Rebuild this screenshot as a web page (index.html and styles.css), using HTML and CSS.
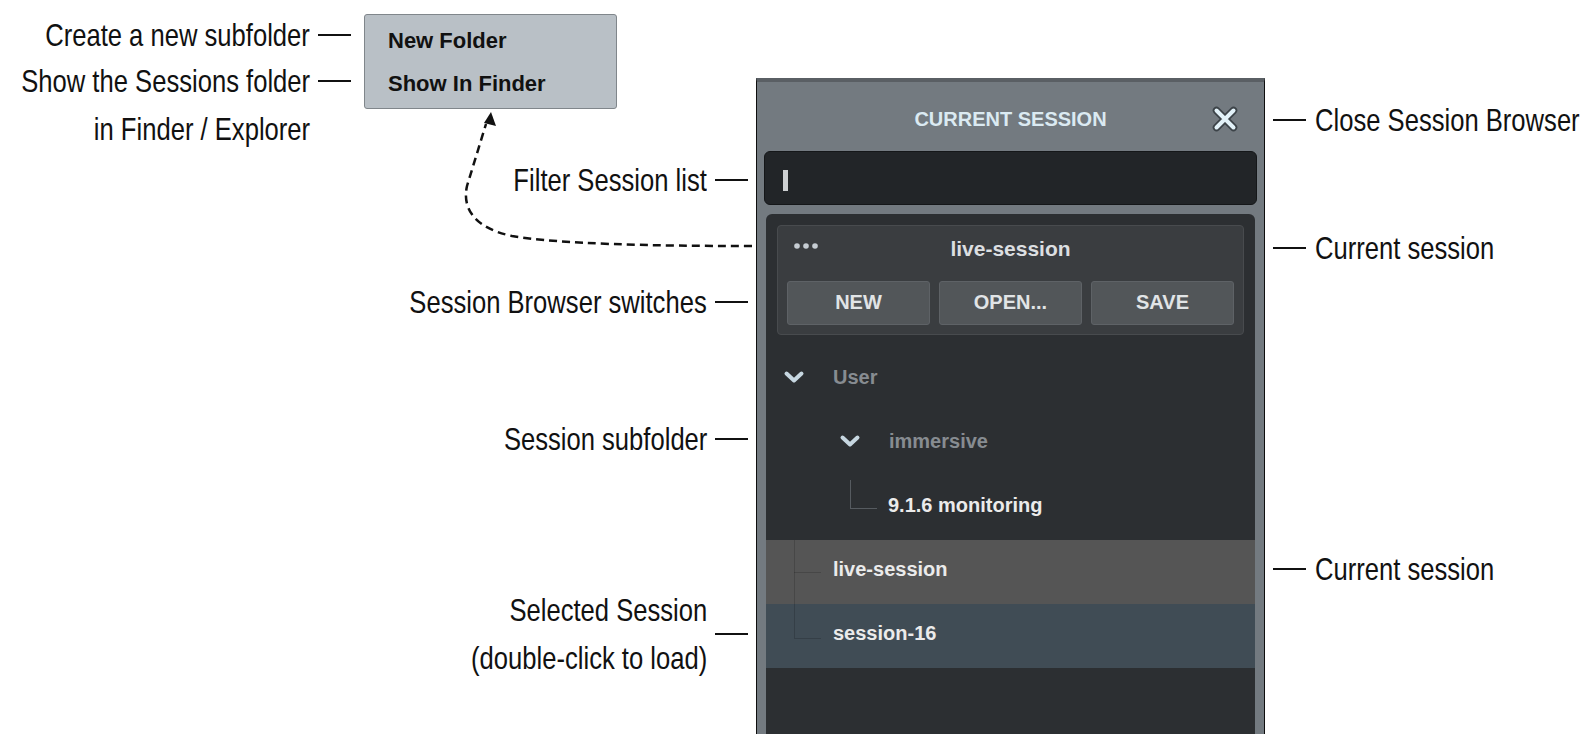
FILE: index.html
```html
<!DOCTYPE html>
<html lang="en">
  <head>
    <meta charset="UTF-8" />
    <meta name="viewport" content="width=device-width, initial-scale=1.0" />
    <title>Session Browser</title>
    <link rel="stylesheet" href="styles.css">
  </head>
  <body>
    <div class="page">
      <div class="left">
        <svg class="arrow" width="756" height="734" viewBox="0 0 756 734">
          <path d="M752 246 C650 246 560 244 512 236 C474 228 462 208 467 186 L486 124" fill="none" stroke="#111" stroke-width="2.5" stroke-dasharray="8 5" />
          <polygon points="491,112 496,126 484,123" fill="#111" />
        </svg>

        <div class="menu-group">
          <div class="menu-notes">
            <div class="note note-first"><span>Create a new subfolder</span><i class="dash"></i></div>
            <div class="note note-two"><span>Show the Sessions folder<br>in Finder / Explorer</span><i class="dash"></i></div>
          </div>
          <div class="menu">
            <div class="menu-item">New Folder</div>
            <div class="menu-item">Show In Finder</div>
          </div>
        </div>

        <div class="panel-notes">
          <div class="note note-filter"><span>Filter Session list</span><i class="dash"></i></div>
          <div class="note note-switches"><span>Session Browser switches</span><i class="dash"></i></div>
          <div class="note note-subfolder"><span>Session subfolder</span><i class="dash"></i></div>
          <div class="note note-selected"><span>Selected Session<br>(double-click to load)</span><i class="dash"></i></div>
        </div>
      </div>

      <div class="panel">
        <div class="panel-head">
          <span></span>
          <span class="panel-title">CURRENT SESSION</span>
          <svg class="close" width="28" height="28" viewBox="0 0 28 28">
            <path d="M5.5 5.5 L22.5 22.5 M22.5 5.5 L5.5 22.5" stroke="#3c4348" stroke-width="7.5" stroke-linecap="round" />
            <path d="M5.5 5.5 L22.5 22.5 M22.5 5.5 L5.5 22.5" stroke="#e2f1f8" stroke-width="4" stroke-linecap="round" />
          </svg>
        </div>

        <div class="search"><i class="cursor"></i></div>

        <div class="list">
          <div class="card">
            <div class="card-head">
              <svg class="dots" width="24" height="6" viewBox="0 0 24 6">
                <circle cx="3" cy="3" r="2.8" fill="#c6cdd3" />
                <circle cx="12" cy="3" r="2.8" fill="#c6cdd3" />
                <circle cx="21" cy="3" r="2.8" fill="#c6cdd3" />
              </svg>
              <span class="card-title">live-session</span>
              <span></span>
            </div>
            <div class="card-buttons">
              <button>NEW</button>
              <button>OPEN...</button>
              <button>SAVE</button>
            </div>
          </div>

          <div class="row folder level-0">
            <svg class="chevron" width="22" height="14" viewBox="0 0 22 14">
              <polyline points="3.5,3.5 11,10.5 18.5,3.5" fill="none" stroke="#c7d7e1" stroke-width="4" stroke-linecap="round" stroke-linejoin="round" />
            </svg>
            <span class="row-name">User</span>
          </div>
          <div class="row folder level-1">
            <svg class="chevron" width="22" height="14" viewBox="0 0 22 14">
              <polyline points="3.5,3.5 11,10.5 18.5,3.5" fill="none" stroke="#c7d7e1" stroke-width="4" stroke-linecap="round" stroke-linejoin="round" />
            </svg>
            <span class="row-name">immersive</span>
          </div>
          <div class="row session level-2">
            <span class="row-name">9.1.6 monitoring</span>
          </div>
          <div class="row session level-1s current">
            <span class="row-name">live-session</span>
          </div>
          <div class="row session level-1s selected last">
            <span class="row-name">session-16</span>
          </div>
        </div>
      </div>

      <div class="right">
        <div class="note note-close"><i class="dash"></i><span>Close Session Browser</span></div>
        <div class="note note-current"><i class="dash"></i><span>Current session</span></div>
        <div class="note note-current2"><i class="dash"></i><span>Current session</span></div>
      </div>
    </div>
  </body>
</html>
```

FILE: styles.css
```css
body {
  margin: 0;
  background: #fff;
  font-family: "Liberation Sans", Arial, sans-serif;
  overflow: hidden;
}
.page {
  display: flex;
  width: 1594px;
  height: 734px;
}

/* annotations */
.left {
  position: relative;
  width: 756px;
  flex-shrink: 0;
}
.arrow {
  position: absolute;
  top: 0;
  left: 0;
  pointer-events: none;
}
.note {
  display: flex;
  align-items: center;
  justify-content: flex-end;
  gap: 8px;
  font-family: "Liberation Sans", Arial, sans-serif;
  font-size: 32px;
  line-height: 46px;
  color: #111;
  text-align: right;
  white-space: nowrap;
}
/* condensed look of the callout font */
.note span {
  display: inline-block;
  transform: scaleX(0.8);
  transform-origin: right center;
}
.right .note span {
  transform-origin: left center;
}
.dash {
  display: block;
  width: 33px;
  height: 2px;
  background: #111;
  flex-shrink: 0;
}
.menu-group {
  display: flex;
  align-items: flex-start;
  margin-top: 13px;
}
.menu-notes {
  width: 351px;
  flex-shrink: 0;
}
.note-first {
  line-height: 44px;
}
.note-two {
  align-items: flex-start;
  line-height: 48px;
}
.note-two .dash {
  margin-top: 23px;
}
.menu {
  margin: 1px 0 0 13px;
  width: 253px;
  flex-shrink: 0;
  box-sizing: border-box;
  padding: 4px 0 3px 23px;
  background: #b9c0c6;
  border: 1px solid #80868b;
  border-radius: 3px;
}
.menu-item {
  font-size: 22px;
  font-weight: bold;
  line-height: 43px;
  color: #111;
}
.panel-notes {
  padding-right: 8px;
}
.note-filter {
  margin-top: 4px;
}
.note-switches {
  margin-top: 76px;
}
.note-subfolder {
  margin-top: 91px;
}
.note-selected {
  margin-top: 124px;
  line-height: 48px;
}
.right {
  padding-left: 8px;
}
.right .note {
  justify-content: flex-start;
  gap: 9px;
  text-align: left;
}
.note-close {
  margin-top: 97px;
}
.note-current {
  margin-top: 82px;
}
.note-current2 {
  margin-top: 275px;
}

/* session browser panel */
.panel {
  width: 509px;
  height: 656px;
  margin-top: 78px;
  box-sizing: border-box;
  flex-shrink: 0;
  display: flex;
  flex-direction: column;
  background: #737a80;
  border-top: 4px solid #5a5f64;
  border-left: 1px solid #0e0e0e;
  border-right: 1px solid #0e0e0e;
}
.panel-head {
  height: 69px;
  box-sizing: border-box;
  padding-top: 5px;
  display: grid;
  grid-template-columns: 1fr auto 1fr;
  align-items: center;
}
.panel-title {
  font-size: 20px;
  font-weight: bold;
  color: #dbeaf2;
}
.close {
  justify-self: end;
  margin-right: 25px;
}
.search {
  height: 54px;
  margin: 0 7px;
  flex-shrink: 0;
  box-sizing: border-box;
  display: flex;
  align-items: center;
  padding: 4px 0 0 18px;
  background: #222528;
  border: 1px solid #151719;
  border-radius: 6px;
}
.cursor {
  display: block;
  width: 5px;
  height: 21px;
  background: #cdd0d2;
}
.list {
  flex: 1;
  margin: 9px 9px 0;
  padding-top: 11px;
  background: #2c2f32;
  border-radius: 6px 6px 0 0;
}
.card {
  margin: 0 11px;
  height: 110px;
  box-sizing: border-box;
  padding: 0 9px 9px;
  display: flex;
  flex-direction: column;
  background: #3a3d40;
  border: 1px solid #484b4e;
  border-radius: 4px;
}
.card-head {
  height: 46px;
  display: grid;
  grid-template-columns: 1fr auto 1fr;
  align-items: center;
}
.dots {
  margin: 0 0 6px 7px;
}
.card-title {
  font-size: 21px;
  font-weight: bold;
  color: #dcdfe1;
}
.card-buttons {
  display: flex;
  gap: 9px;
  margin-top: 9px;
  height: 45px;
}
.card-buttons button {
  flex: 1;
  font-family: "Liberation Sans", Arial, sans-serif;
  font-size: 20px;
  font-weight: bold;
  color: #e1e4e6;
  background: #525659;
  border: 1px solid #5e6266;
  border-radius: 3px;
  padding: 0;
}
.row {
  position: relative;
  height: 64px;
  box-sizing: border-box;
  padding-bottom: 6px;
  display: flex;
  align-items: center;
  font-size: 20px;
  font-weight: bold;
}
.row.level-0 {
  margin-top: 13px;
  padding-left: 17px;
}
.row.level-1 {
  padding-left: 73px;
}
.chevron {
  margin-right: 28px;
}
.folder .row-name {
  color: #878c91;
}
.session .row-name {
  color: #ebebeb;
}
.row.level-2 {
  padding-left: 122px;
}
.row.level-2::before {
  content: "";
  position: absolute;
  left: 84px;
  top: 4px;
  width: 26px;
  height: 28px;
  border-left: 1px solid #565b60;
  border-bottom: 1px solid #565b60;
}
.row.level-1s {
  padding-left: 67px;
}
.row.level-1s::before {
  content: "";
  position: absolute;
  left: 28px;
  top: 0;
  height: 100%;
  border-left: 1px solid rgba(0, 0, 0, 0.16);
}
.row.level-1s::after {
  content: "";
  position: absolute;
  left: 28px;
  top: 32px;
  width: 27px;
  border-top: 1px solid rgba(0, 0, 0, 0.16);
}
.row.last::before {
  height: 34px;
}
.row.last::after {
  top: 34px;
}
.current {
  background: #555555;
}
.selected {
  background: #404c55;
}
```
